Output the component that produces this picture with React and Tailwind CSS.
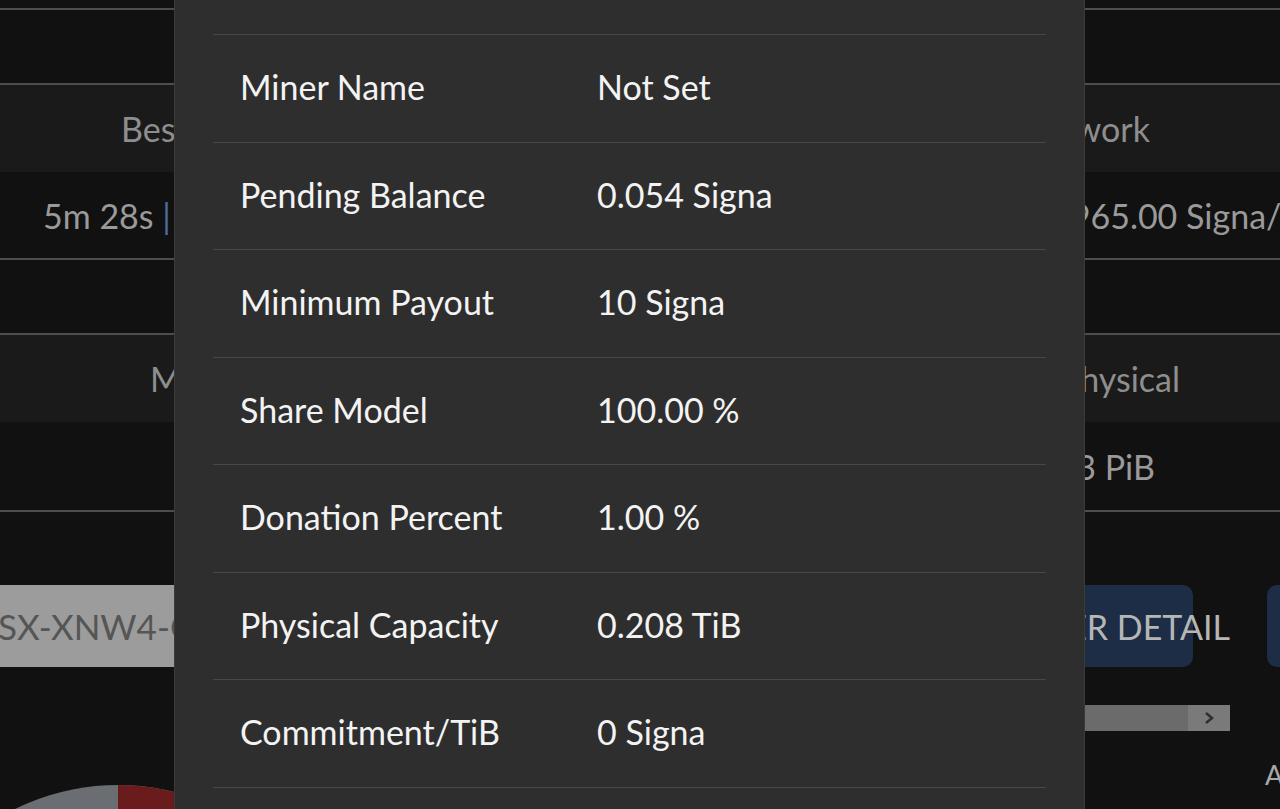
import React from 'react';

const details = [
  ['Miner Name', 'Not Set'],
  ['Pending Balance', '0.054 Signa'],
  ['Minimum Payout', '10 Signa'],
  ['Share Model', '100.00 %'],
  ['Donation Percent', '1.00 %'],
  ['Physical Capacity', '0.208 TiB'],
  ['Commitment/TiB', '0 Signa'],
];

function Rule() {
  return <div className="h-[2px] bg-[#4d4d4d]" />;
}

function PoolStats() {
  return (
    <div className="flex flex-col">
      <div className="h-[8px]" />
      <Rule />
      <div className="h-[73px]" />
      <Rule />
      {/* first stats table */}
      <div className="flex h-[87px] items-center bg-[#1a1a1a] text-[34px] text-[#8e8e8e]">
        <div className="flex-1 pl-[121px] whitespace-nowrap">Best Deadline</div>
        <div className="w-[280px] pr-[130px] text-right whitespace-nowrap">Network</div>
      </div>
      <div className="flex h-[86px] items-center text-[34px] text-[#9a9a9a]">
        <div className="flex-1 pl-[43px] whitespace-nowrap">
          5m 28s <span className="text-[#4e6a9a]">|</span> 4 817
        </div>
        <div className="w-[229px] overflow-hidden whitespace-nowrap">1965.00 Signa/TiB</div>
      </div>
      <Rule />
      <div className="h-[73px]" />
      <Rule />
      {/* second stats table */}
      <div className="flex h-[87px] items-center bg-[#1a1a1a] text-[34px] text-[#8e8e8e]">
        <div className="flex-1 pl-[150px] whitespace-nowrap">Miners</div>
        <div className="w-[280px] pr-[100px] text-right whitespace-nowrap">Physical</div>
      </div>
      <div className="flex h-[88px] items-center text-[34px] text-[#9a9a9a]">
        <div className="flex-1" />
        <div className="w-[280px] pr-[125px] text-right whitespace-nowrap">1.93 PiB</div>
      </div>
      <Rule />
      <div className="h-[73px]" />

      {/* search row */}
      <div className="flex h-[82px] items-stretch">
        <div className="flex w-[600px] items-center overflow-hidden bg-[#9c9c9c] text-[35px] text-[#555]">
          <span className="-ml-[2px] whitespace-nowrap">SX-XNW4-C8LJ-9PQT</span>
        </div>
        <div className="flex-1" />
        <div className="flex w-[200px] items-center justify-end rounded-[10px] bg-[#1c2d45] text-[34px] text-[#b6b6b6]">
          <span className="-mr-[37px] whitespace-nowrap">MINER DETAIL</span>
        </div>
        <div className="ml-[74px] -mr-[107px] w-[120px] shrink-0 rounded-[10px] bg-[#1c2d45]" />
      </div>

      <div className="h-[38px]" />
      {/* table scrollbar */}
      <div className="flex h-[26px]">
        <div className="ml-[800px] flex w-[430px] justify-end bg-[#6b6b6b]">
          <div className="flex w-[42px] items-center justify-center bg-[#7a7a7a]">
            <svg width="14" height="14" viewBox="0 0 14 14">
              <path d="M4 2 L10 7 L4 12" fill="none" stroke="#2f2f2f" strokeWidth="2.5" />
            </svg>
          </div>
        </div>
      </div>

      {/* chart + legend */}
      <div className="flex">
        <div className="mt-[54px] w-[300px]">
          <svg width="300" height="40" viewBox="0 0 300 40" className="overflow-visible">
            <circle cx="118" cy="233" r="233" fill="#6a6d72" />
            <path d="M118 233 L118 0 A233 233 0 0 1 319.8 116.5 Z" fill="#6a1c1c" />
          </svg>
        </div>
        <div className="flex-1" />
        <div className="w-[15px] shrink-0 pt-[30px] text-[27px] leading-none text-[#a8a8a8] whitespace-nowrap">
          Active
        </div>
      </div>
    </div>
  );
}

function MinerModal() {
  return (
    <div className="absolute top-0 bottom-0 left-[174px] w-[911px] border-x border-[#3b3b3b] bg-[#2e2e2e] px-[38px]">
      <div className="h-[34px]" />
      {details.map(([label, value]) => (
        <div
          key={label}
          className="grid h-[107.5px] grid-cols-[357px_1fr] items-center border-t border-[#474747] pb-[3px] text-[34px] text-[#f3f3f3]"
        >
          <div className="px-[27px] whitespace-nowrap">{label}</div>
          <div className="px-[27px] whitespace-nowrap">{value}</div>
        </div>
      ))}
      <div className="h-[40px] border-t border-[#474747]" />
    </div>
  );
}

export default function App() {
  return (
    <div className="relative h-[809px] w-[1280px] overflow-hidden bg-[#111111] font-['Lato',sans-serif]">
      <PoolStats />
      <MinerModal />
    </div>
  );
}
